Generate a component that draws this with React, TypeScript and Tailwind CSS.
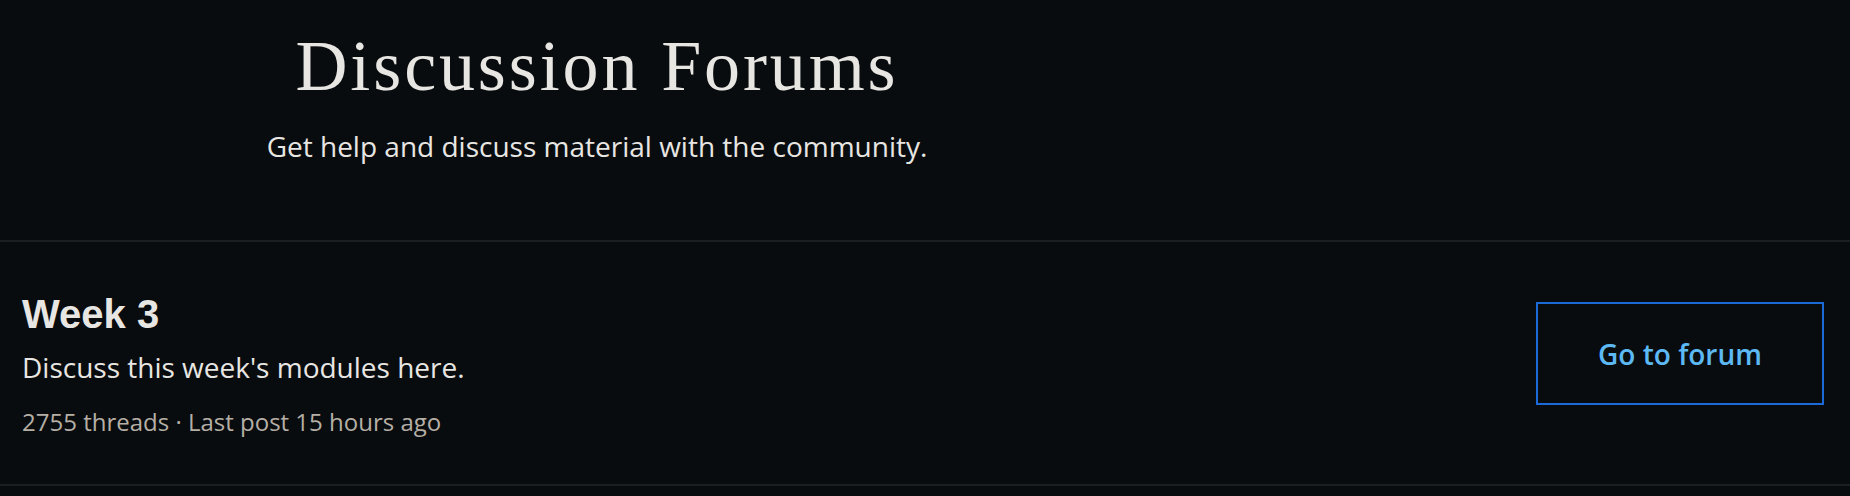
export default function App() {
    // Forum listing page: centred header, then one forum row per week

    return (
        <div className="min-h-screen w-full bg-[#090c0e] text-[#e8e6e3] font-['Open_Sans',sans-serif]">
            {/* Header */}
            <div className="h-[242px] border-b-2 border-[#1c1f21]">
                <div className="w-[1194px] pt-[26px] flex flex-col items-center text-center">
                    <h1 className="font-['Liberation_Serif',serif] font-normal text-[72px] leading-[80px] tracking-[0.04em]">
                        Discussion Forums
                    </h1>
                    <p className="mt-[21px] text-[28px] leading-[38px]">
                        Get help and discuss material with the community.
                    </p>
                </div>
            </div>

            {/* Forum row */}
            <div className="flex items-start justify-between pl-[22px] pr-[26px] pt-[50px] pb-[46px] border-b-2 border-[#1c1f21]">
                <div className="flex flex-col">
                    <h2 className="font-['Liberation_Sans',Arial,sans-serif] font-bold text-[40px] leading-[44px]">
                        Week 3
                    </h2>
                    <p className="mt-[12px] text-[28px] leading-[38px]">
                        Discuss this week's modules here.
                    </p>
                    <p className="mt-[20px] text-[24px] leading-[32px] text-[#b5afa6]">
                        2755 threads · Last post 15 hours ago
                    </p>
                </div>

                <button className="mt-[10px] w-[288px] h-[103px] border-2 border-[#1b6ad8] text-[#5cb9f3] text-[28px] font-semibold flex items-center justify-center">
                    Go to forum
                </button>
            </div>
        </div>
    )
}
